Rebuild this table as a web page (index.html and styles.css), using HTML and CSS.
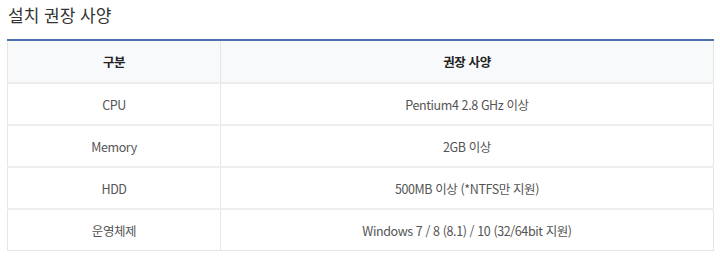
FILE: index.html
```html
<!DOCTYPE html>
<html lang="ko">
<head>
<meta charset="utf-8">
<link rel="stylesheet" href="styles.css">
</head>
<body>
<div class="wrap">
  <h2 class="title">설치 권장 사양</h2>
  <table class="spec">
    <colgroup><col class="c1"><col class="c2"></colgroup>
    <thead>
      <tr><th>구분</th><th>권장 사양</th></tr>
    </thead>
    <tbody>
      <tr><td>CPU</td><td>Pentium4 2.8 GHz 이상</td></tr>
      <tr><td>Memory</td><td>2GB 이상</td></tr>
      <tr><td>HDD</td><td>500MB 이상 (*NTFS만 지원)</td></tr>
      <tr><td>운영체제</td><td>Windows 7 / 8 (8.1) / 10 (32/64bit 지원)</td></tr>
    </tbody>
  </table>
</div>
</body>
</html>
```
FILE: styles.css
```css
html, body { margin: 0; padding: 0; background: #fff; }
body { font-family: "Noto Sans CJK KR", "Noto Sans", sans-serif; color: #444; }
.wrap { padding: 0 6px 0 7px; }
.title {
  margin: 0;
  padding: 2px 0 0 1px;
  height: 37px;
  font-size: 17px;
  font-weight: 400;
  line-height: 26px;
  color: #333;
}
.spec {
  width: 707px;
  border-collapse: collapse;
  border-top: 2px solid #4a72b0;
  font-size: 12.5px;
  table-layout: fixed;
}
.c1 { width: 213px; }
.spec th, .spec td {
  border: 1px solid #e6e6e6;
  text-align: center;
  height: 40px;
  padding: 0;
  letter-spacing: -0.4px;
}
.spec th {
  background: #f8f9fb;
  font-weight: 700;
  color: #222;
  height: 41px;
  border-bottom: 2px solid #ececec;
}
.spec td { color: #555; }
.spec tbody tr + tr td { border-top: 2px solid #eeeeee; }
```
